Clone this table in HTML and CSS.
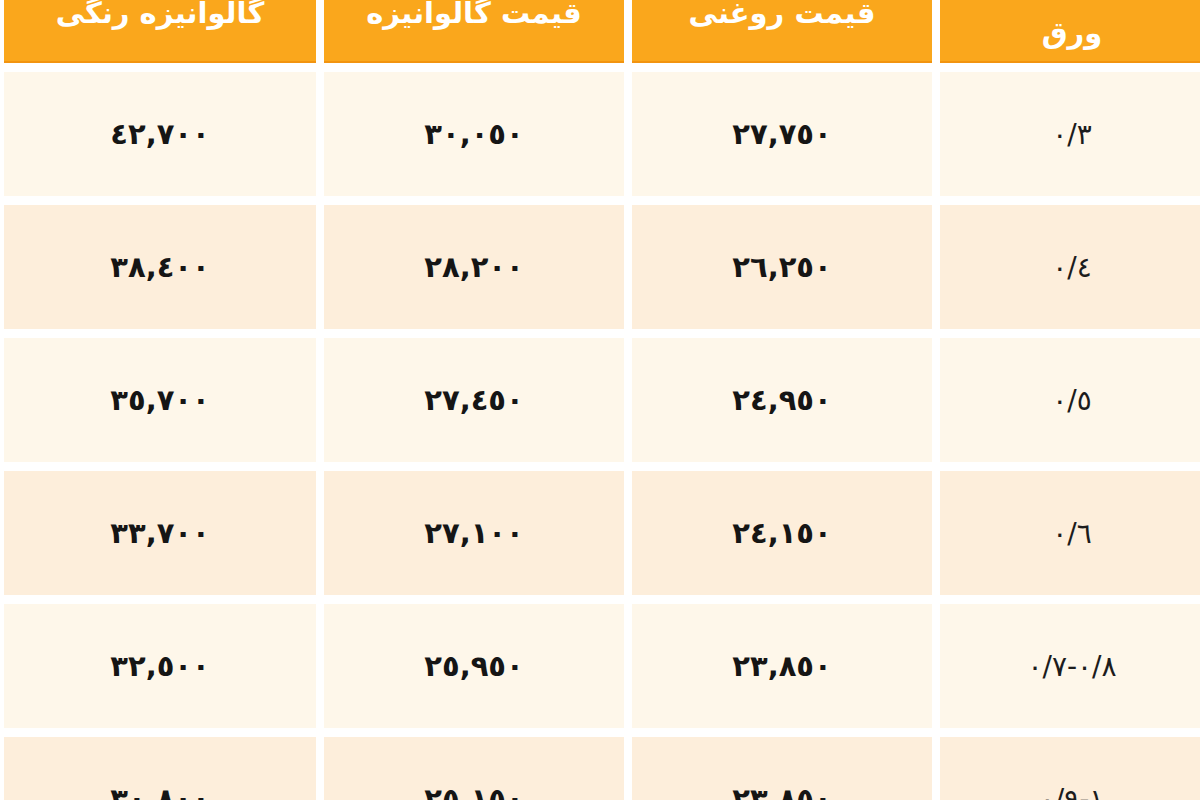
FILE: index.html
```html
<!DOCTYPE html>
<html lang="fa">
<head>
<meta charset="utf-8">
<title>قیمت ورق</title>
<link rel="stylesheet" href="styles.css">
</head>
<body>
<div class="sheet">
  <div class="grid">
    <div class="th th-low">ورق</div>
    <div class="th">قیمت روغنی</div>
    <div class="th">قیمت گالوانیزه</div>
    <div class="th">گالوانیزه رنگی</div>

    <div class="td odd gauge"><span class="num">٠/٣</span></div>
    <div class="td odd"><span class="num">٢٧,٧٥٠</span></div>
    <div class="td odd"><span class="num">٣٠,٠٥٠</span></div>
    <div class="td odd"><span class="num">٤٢,٧٠٠</span></div>

    <div class="td even gauge"><span class="num">٠/٤</span></div>
    <div class="td even"><span class="num">٢٦,٢٥٠</span></div>
    <div class="td even"><span class="num">٢٨,٢٠٠</span></div>
    <div class="td even"><span class="num">٣٨,٤٠٠</span></div>

    <div class="td odd gauge"><span class="num">٠/٥</span></div>
    <div class="td odd"><span class="num">٢٤,٩٥٠</span></div>
    <div class="td odd"><span class="num">٢٧,٤٥٠</span></div>
    <div class="td odd"><span class="num">٣٥,٧٠٠</span></div>

    <div class="td even gauge"><span class="num">٠/٦</span></div>
    <div class="td even"><span class="num">٢٤,١٥٠</span></div>
    <div class="td even"><span class="num">٢٧,١٠٠</span></div>
    <div class="td even"><span class="num">٣٣,٧٠٠</span></div>

    <div class="td odd gauge"><span class="num">٠/٧-٠/٨</span></div>
    <div class="td odd"><span class="num">٢٣,٨٥٠</span></div>
    <div class="td odd"><span class="num">٢٥,٩٥٠</span></div>
    <div class="td odd"><span class="num">٣٢,٥٠٠</span></div>

    <div class="td even gauge"><span class="num">٠/٩-١</span></div>
    <div class="td even"><span class="num">٢٣,٨٥٠</span></div>
    <div class="td even"><span class="num">٢٥,١٥٠</span></div>
    <div class="td even"><span class="num">٣٠,٨٠٠</span></div>
  </div>
</div>
</body>
</html>
```

FILE: styles.css
```css
html, body {
  margin: 0;
  padding: 0;
  background: #ffffff;
  overflow: hidden;
}

body {
  width: 1200px;
  height: 800px;
  font-family: "DejaVu Sans", "Noto Sans", sans-serif;
}

.sheet {
  width: 1204px;
}

.grid {
  direction: rtl;
  display: grid;
  grid-template-columns: 264px 300px 300px 312px;
  grid-template-rows: 63px repeat(6, 124px);
  column-gap: 8px;
  row-gap: 9px;
  padding-left: 4px;
}

.th {
  background: #faa71c;
  border-bottom: 2px solid #f29410;
  color: #ffffff;
  font-size: 29px;
  font-weight: bold;
  line-height: 26px;
  text-align: center;
}

.th-low {
  display: flex;
  align-items: center;
  justify-content: center;
  padding-top: 4px;
}

.td {
  display: flex;
  align-items: center;
  justify-content: center;
  color: #151515;
  font-size: 29px;
  font-weight: bold;
}

.odd {
  background: #fef7ea;
}

.even {
  background: #fdeedb;
}

.gauge {
  font-size: 28px;
  font-weight: normal;
  color: #1c1c1c;
}

.num {
  direction: ltr;
  unicode-bidi: bidi-override;
}
```
